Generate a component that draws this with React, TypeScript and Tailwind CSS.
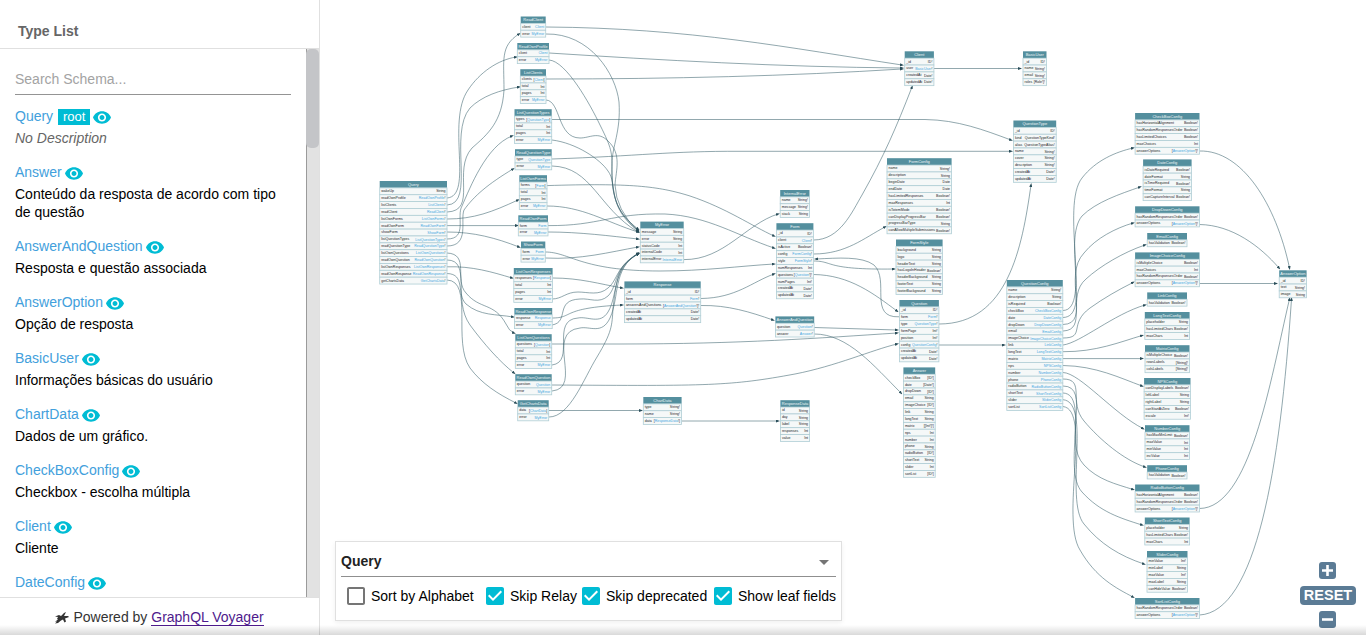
import { Fragment } from 'react';

const types = [
  { name: 'Query', root: true, description: 'No Description' },
  { name: 'Answer', description: 'Conteúdo da resposta de acordo com tipo de questão' },
  { name: 'AnswerAndQuestion', description: 'Resposta e questão associada' },
  { name: 'AnswerOption', description: 'Opção de resposta' },
  { name: 'BasicUser', description: 'Informações básicas do usuário' },
  { name: 'ChartData', description: 'Dados de um gráfico.' },
  { name: 'CheckBoxConfig', description: 'Checkbox - escolha múltipla' },
  { name: 'Client', description: 'Cliente' },
  { name: 'DateConfig' },
];

interface GraphNode {
  name: string;
  x: number;
  y: number;
  w: number;
  fields: string[];
}

const ROW = 6.87;

// "*" marks a field whose type is another node of the graph
const nodes: GraphNode[] = [
  {
    name: 'Query', x: 379.7, y: 181, w: 67.3,
    fields: [
      'wakeUp String', 'readOwnProfile *ReadOwnProfile!', 'listClients *ListClients!', 'readClient *ReadClient!',
      'listOwnForms *ListOwnForms!', 'readOwnForm *ReadOwnForm!', 'showForm *ShowForm!',
      'listQuestionTypes *ListQuestionTypes!', 'readQuestionType *ReadQuestionType!',
      'listOwnQuestions *ListOwnQuestions!', 'readOwnQuestion *ReadOwnQuestion!',
      'listOwnResponses *ListOwnResponses!', 'readOwnResponse *ReadOwnResponse!', 'getChartsData *GetChartsData!',
    ],
  },
  { name: 'ReadClient', x: 520.7, y: 16.5, w: 25, fields: ['client *Client', 'error *MyError'] },
  { name: 'ReadOwnProfile', x: 517.3, y: 43, w: 31.7, fields: ['client *Client', 'error *MyError'] },
  { name: 'ListClients', x: 520.3, y: 69.2, w: 25.7, fields: ['clients *[Client]', 'total Int', 'pages Int', 'error *MyError'] },
  { name: 'ListQuestionTypes', x: 514.5, y: 109.2, w: 37.2, fields: ['types *[QuestionType]', 'total Int', 'pages Int', 'error *MyError'] },
  { name: 'ReadQuestionType', x: 515, y: 149.2, w: 36.7, fields: ['type *QuestionType', 'error *MyError'] },
  { name: 'ListOwnForms', x: 519.3, y: 175.2, w: 27.7, fields: ['forms *[Form]', 'total Int', 'pages Int', 'error *MyError'] },
  { name: 'ReadOwnForm', x: 518.3, y: 215.3, w: 29.7, fields: ['form *Form', 'error *MyError'] },
  { name: 'ShowForm', x: 521, y: 241.5, w: 24.3, fields: ['form *Form', 'error *MyError'] },
  { name: 'ListOwnResponses', x: 513.8, y: 268, w: 38.8, fields: ['responses *[Response]', 'total Int', 'pages Int', 'error *MyError'] },
  { name: 'ReadOwnResponse', x: 514.4, y: 308, w: 37.8, fields: ['response *Response', 'error *MyError'] },
  { name: 'ListOwnQuestions', x: 515.3, y: 334.2, w: 36.4, fields: ['questions *[Question]', 'total Int', 'pages Int', 'error *MyError'] },
  { name: 'ReadOwnQuestion', x: 515.3, y: 374.2, w: 36.4, fields: ['question *Question', 'error *MyError'] },
  { name: 'GetChartsData', x: 517.7, y: 400.2, w: 31, fields: ['data *[ChartData]', 'error *MyError'] },
  {
    name: 'MyError', x: 640.3, y: 221.6, w: 43.4,
    fields: ['message String', 'error String', 'statusCode Int', 'internalCode Int', 'internalError *InternalError'],
  },
  {
    name: 'Response', x: 624.4, y: 281.4, w: 76.3,
    fields: ['_id ID!', 'form *Form!', 'answersAndQuestions *[AnswerAndQuestion!]!', 'createdAt Date!', 'updatedAt Date!'],
  },
  { name: 'ChartData', x: 643.3, y: 397, w: 38.3, fields: ['type String!', 'name String!', 'data *[ResponseData!]'] },
  { name: 'InternalError', x: 780.2, y: 190, w: 29.3, fields: ['name String!', 'message String!', 'stack String'] },
  {
    name: 'Form', x: 776.4, y: 223.2, w: 37,
    fields: [
      '_id ID!', 'client *Client!', 'isActive Boolean!', 'config *FormConfig!', 'style *FormStyle!',
      'numResponses Int', 'questions *[Question!]!', 'numPages Int!', 'createdAt Date!', 'updatedAt Date!',
    ],
  },
  { name: 'AnswerAndQuestion', x: 775.4, y: 316.4, w: 38.8, fields: ['question *Question!', 'answer *Answer!'] },
  { name: 'ResponseData', x: 780.4, y: 400.2, w: 29.2, fields: ['id String', 'day String', 'label String', 'responses Int', 'value Int'] },
  { name: 'Client', x: 904.7, y: 51.3, w: 29.2, fields: ['_id ID!', 'user *BasicUser!', 'createdAt Date!', 'updatedAt Date!'] },
  { name: 'BasicUser', x: 1023, y: 51.3, w: 23.5, fields: ['_id ID!', 'name String!', 'email String!', 'roles [Role!]!'] },
  {
    name: 'QuestionType', x: 1013.4, y: 120.5, w: 42.8,
    fields: [
      '_id ID!', 'kind QuestionTypeKind!', 'alias QuestionTypeAlias!', 'name String!', 'cover String!',
      'description String!', 'createdAt Date!', 'updatedAt Date!',
    ],
  },
  {
    name: 'FormConfig', x: 887, y: 158.2, w: 64.6,
    fields: [
      'name String!', 'description String', 'beginDate Date', 'endDate Date', 'hasLimitedResponses Boolean!',
      'maxResponses Int', 'isTotemMode Boolean!', 'canDisplayProgressBar Boolean!', 'progressBarType String',
      'canAllowMultipleSubmissions Boolean!',
    ],
  },
  {
    name: 'FormStyle', x: 896, y: 239.5, w: 46.6,
    fields: [
      'background String', 'logo String', 'headerText String', 'hasLogoInHeader Boolean!',
      'headerBackground String', 'footerText String', 'footerBackground String',
    ],
  },
  {
    name: 'Question', x: 899.4, y: 300, w: 39.5,
    fields: [
      '_id ID!', 'form *Form!', 'type *QuestionType!', 'formPage Int!', 'position Int!',
      'config *QuestionConfig!', 'createdAt Date!', 'updatedAt Date!',
    ],
  },
  {
    name: 'Answer', x: 903.4, y: 367.4, w: 31.8,
    fields: [
      'checkBox [ID!]', 'date [Date!]', 'dropDown [ID!]', 'email String', 'imageChoice [ID!]', 'link String',
      'longText String', 'matrix [[Int!]!]', 'nps Int', 'number Int', 'phone String', 'radioButton [ID!]',
      'shortText String', 'slider Int', 'sortList [ID!]',
    ],
  },
  {
    name: 'QuestionConfig', x: 1006.8, y: 280, w: 56,
    fields: [
      'name String!', 'description String', 'isRequired Boolean!', 'checkBox *CheckBoxConfig', 'date *DateConfig',
      'dropDown *DropDownConfig', 'email *EmailConfig', 'imageChoice *ImageChoiceConfig', 'link *LinkConfig',
      'longText *LongTextConfig', 'matrix *MatrixConfig', 'nps *NPSConfig', 'number *NumberConfig',
      'phone *PhoneConfig', 'radioButton *RadioButtonConfig', 'shortText *ShortTextConfig',
      'slider *SliderConfig', 'sortList *SortListConfig',
    ],
  },
  {
    name: 'CheckBoxConfig', x: 1135.1, y: 113, w: 64.4,
    fields: [
      'hasHorizontalAlignment Boolean!', 'hasRandomResponsesOrder Boolean!', 'hasLimitedChoices Boolean!',
      'maxChoices Int', 'answerOptions *[AnswerOption!]!',
    ],
  },
  {
    name: 'DateConfig', x: 1143.1, y: 159.4, w: 48.5,
    fields: ['isDateRequired Boolean!', 'dateFormat String', 'isTimeRequired Boolean!', 'timeFormat String', 'canCaptureInterval Boolean!'],
  },
  { name: 'DropDownConfig', x: 1135.1, y: 206.3, w: 64.4, fields: ['hasRandomResponsesOrder Boolean!', 'answerOptions *[AnswerOption!]!'] },
  { name: 'EmailConfig', x: 1147.2, y: 233, w: 39.8, fields: ['hasValidation Boolean!'] },
  {
    name: 'ImageChoiceConfig', x: 1135.1, y: 252.4, w: 64.4,
    fields: ['isMultipleChoice Boolean!', 'maxChoices Int', 'hasRandomResponsesOrder Boolean!', 'answerOptions *[AnswerOption!]!'],
  },
  { name: 'LinkConfig', x: 1147.2, y: 292.4, w: 39.8, fields: ['hasValidation Boolean!'] },
  { name: 'LongTextConfig', x: 1144.8, y: 312, w: 44.8, fields: ['placeholder String', 'hasLimitedChars Boolean!', 'maxChars Int'] },
  { name: 'MatrixConfig', x: 1145, y: 345.2, w: 44.5, fields: ['isMultipleChoice Boolean!', 'rowsLabels [String]!', 'colsLabels [String]!'] },
  {
    name: 'NPSConfig', x: 1144.1, y: 378, w: 46.4,
    fields: ['canDisplayLabels Boolean!', 'leftLabel String', 'rightLabel String', 'canStartAtZero Boolean!', 'escale Int!'],
  },
  { name: 'NumberConfig', x: 1145, y: 425.2, w: 44.5, fields: ['hasMaxMinLimit Boolean!', 'maxValue Int', 'minValue Int', 'incValue Int'] },
  { name: 'PhoneConfig', x: 1147.2, y: 465.2, w: 39.8, fields: ['hasValidation Boolean!'] },
  {
    name: 'RadioButtonConfig', x: 1135.1, y: 484.5, w: 64.4,
    fields: ['hasHorizontalAlignment Boolean!', 'hasRandomResponsesOrder Boolean!', 'answerOptions *[AnswerOption!]!'],
  },
  { name: 'ShortTextConfig', x: 1144.8, y: 517.5, w: 44.8, fields: ['placeholder String', 'hasLimitedChars Boolean!', 'maxChars Int'] },
  {
    name: 'SliderConfig', x: 1147, y: 551, w: 40.5,
    fields: ['minValue Int!', 'minLabel String', 'maxValue Int!', 'maxLabel String', 'canHideValue Boolean!'],
  },
  { name: 'SortListConfig', x: 1135.1, y: 598, w: 64.4, fields: ['hasRandomResponsesOrder Boolean!', 'answerOptions *[AnswerOption!]!'] },
  { name: 'AnswerOption', x: 1279.2, y: 270.3, w: 27.4, fields: ['_id ID!', 'text String!', 'image String'] },
];

const edges = [
  // Query
  'M447 198C474 196 446 122 468 90C480 72 498 60 516 57',
  'M447 205C476 204 448 134 470 108C482 96 500 90 519 87',
  'M447 212C478 211 452 170 472 148C488 134 502 122 504 90C504 60 500 46 519 34',
  'M447 219C474 219 492 212 518 200',
  'M447 225.6H517',
  'M447 232C474 232 496 238 519 247',
  'M447 239C468 239 456 216 462 206C470 188 486 146 512 136',
  'M447 246C470 246 460 220 464 210C474 196 488 184 513 169',
  'M447 253C470 254 454 280 466 293C480 310 494 302 506 324Q509 331 514 333',
  'M447 260C472 260 452 300 470 325C484 344 500 362 514 373',
  'M447 266.8C472 266 492 272 512 278',
  'M447 273.5C466 274 456 294 466 304C480 316 496 314 513 317',
  'M447 280C474 281 452 342 470 368C482 384 498 394 516 403',
  // Payloads to Client and QuestionType
  'M546 27C690 28 790 48 902 65',
  'M549 53C660 60 780 67 902 68',
  'M546 79C670 79 790 76 902 69',
  'M552 119.5H925C958 120 984 130 1011 140',
  'M552 159C640 156 670 151 740 151.3H1011',
  // Payloads to MyError
  'M546 34C590 33 616 74 619 102C621 132 612 146 612 164C611 196 616 212 638 229',
  'M549 60C566 61 590 104 600 125C612 149 612 152 612 170C612 198 618 214 638 230',
  'M546 100C561 101 557 138 580 138C590 138 598 131 608 141C622 154 616 170 615 185Q616 210 638 231',
  'M552 140C576 143 600 159 608 171C618 184 606 206 638 231',
  'M552 166C592 167 598 208 638 232',
  'M547 206C582 206 606 222 638 232',
  'M548 232C580 232 610 236 638 239',
  'M545 258C580 260 610 252 638 247',
  'M552 299C562 299 566 292 578 292C588 292 599 296 608 288C618 280 616 266 638 254',
  'M552 325C570 322 554 300 580 299C590 298 599 304 608 296C618 286 614 266 638 254',
  'M552 365C576 362 550 320 578 318C588 316 600 325 608 312C618 296 612 268 638 254',
  'M552 391C584 388 544 332 580 328C590 326 602 335 610 318C620 296 612 270 638 253',
  'M549 417C570 417 584 378 597 357C612 332 612 326 613 308C617 276 618 266 638 254',
  // Payloads to the rest
  'M547 185.6C630 183 658 186 690 196C726 208 752 226 774 236',
  'M548 225.6C600 226 610 213 665 214C708 216 738 236 774 248',
  'M545 252C570 252 580 271 660 271C704 271 740 266 774 264',
  'M553 278C580 278 600 284 622 288',
  'M552 318C574 318 560 308 622 305',
  'M552 344H620C740 344 820 338 897 333',
  'M552 385C710 386 730 386 795 374C836 366 872 350 897 344',
  'M549 410.5H641',
  'M684 259.6C724 260 746 224 778 214',
  'M701 298.5C736 298 752 282 774 274',
  'M701 305.5C728 305 750 312 773 320',
  'M682 421H778',
  // Form, AnswerAndQuestion, Question
  'M813.5 240C840 240 852 212 862 195C884 156 896 128 912 87',
  'M813.5 254C846 254 864 238 885 227',
  'M813.5 261C834 261 824 270 894 269',
  'M813.5 274.5C850 275 874 294 897 311',
  'M814.3 327.5L897 330',
  'M814.3 334C848 334 874 366 901 393',
  'M899 316.8C868 318 890 280 874 265C862 256 838 258 816 259',
  'M939 324C1008 324 1022 248 1031 185',
  'M939 345H1004',
  // QuestionConfig
  'M1063 310.5C1092 310 1060 206 1082 178C1096 160 1116 152 1133 148',
  'M1063 317.5C1092 317 1062 240 1082 216C1096 202 1120 194 1140 187',
  'M1063 324.5C1092 324 1062 276 1084 253C1096 238 1116 228 1133 223',
  'M1063 331C1088 330 1066 296 1086 279C1100 266 1124 252 1145 245',
  'M1063 338C1086 338 1068 324 1090 308C1104 298 1118 290 1133 282.5',
  'M1063 345C1080 343 1114 314 1145 305',
  'M1063 351.7C1096 352 1120 342 1142 335.5',
  'M1063 358.6H1142',
  'M1063 365.5C1096 366 1120 378 1142 386',
  'M1063 372.5C1080 373 1114 414 1143 428.5',
  'M1063 379C1086 379 1068 402 1084 421C1100 440 1124 460 1145 467',
  'M1063 386C1092 386 1062 442 1084 465C1098 480 1116 484 1133 489.5',
  'M1063 393C1090 394 1062 470 1082 492C1100 512 1120 518 1142 525',
  'M1063 399.7C1092 402 1064 500 1084 524C1100 544 1120 556 1144 564',
  'M1063 406.5C1092 410 1060 518 1080 550C1096 578 1116 588 1133 597',
  // Answer options
  'M1199.5 151C1242 150 1276 204 1289.5 268',
  'M1199.5 224.5C1232 225 1260 246 1279 268',
  'M1199.5 283.5H1276',
  'M1199.5 508.5C1250 508 1270 382 1289.5 299',
  'M1199.5 615C1256 612 1280 470 1291.5 299',
  // Client to BasicUser
  'M934 68.5H1020',
];

// Colors only the type name; list brackets and the non-null mark stay dark
function FieldType({ type }: { type: string }) {
  if (!type.startsWith('*')) return <>{type}</>;
  const [, before, name, after] = type.slice(1).match(/^(\[*)(\w+)(.*)$/)!;
  return (
    <>
      {before}
      <tspan fill="#42a6e0">{name}</tspan>
      {after}
    </>
  );
}

function NodeBox({ node }: { node: GraphNode }) {
  return (
    <g>
      <rect x={node.x} y={node.y} width={node.w} height={ROW} fill="#548f9e" />
      <text x={node.x + node.w / 2} y={node.y + 4.8} fontSize="4" textAnchor="middle" fill="#eef5f6">
        {node.name}
      </text>
      {node.fields.map((field, i) => {
        const [name, type] = field.split(' ');
        const y = node.y + ROW * (i + 1);
        return (
          <Fragment key={field}>
            <rect x={node.x} y={y} width={node.w} height={ROW} fill="#f5f8f8" stroke="#b0ced5" strokeWidth="0.8" />
            <text x={node.x + 1.5} y={y + 4.4} fontSize="3.55">{name}</text>
            <text x={node.x + node.w - 1.5} y={y + 4.6} fontSize="3.55" textAnchor="end">
              <FieldType type={type} />
            </text>
          </Fragment>
        );
      })}
    </g>
  );
}

function Eye() {
  return (
    <svg viewBox="1 4.5 22 15" className="w-[18px] h-[13px] ml-[3px] mt-[2px]" fill="#00bcd4">
      <path d="M12 4.5C7 4.5 2.73 7.61 1 12c1.73 4.39 6 7.5 11 7.5s9.27-3.11 11-7.5c-1.73-4.39-6-7.5-11-7.5zM12 17c-2.76 0-5-2.24-5-5s2.24-5 5-5 5 2.24 5 5-2.24 5-5 5zm0-8c-1.66 0-3 1.34-3 3s1.34 3 3 3 3-1.34 3-3-1.34-3-3-3z" />
    </svg>
  );
}

function Checkbox({ checked, label, className }: { checked?: boolean; label: string; className: string }) {
  return (
    <label className={`flex items-center shrink-0 ${className}`}>
      <svg viewBox="3 3 18 18" className="w-[18px] h-[18px] shrink-0 mr-[6px]" fill={checked ? '#00bcd4' : '#757575'}>
        {checked ? (
          <path d="M19 3H5c-1.11 0-2 .9-2 2v14c0 1.1.89 2 2 2h14c1.11 0 2-.9 2-2V5c0-1.1-.89-2-2-2zm-9 14l-5-5 1.41-1.41L10 14.17l7.59-7.59L19 8l-9 9z" />
        ) : (
          <path d="M19 5v14H5V5h14m0-2H5c-1.1 0-2 .9-2 2v14c0 1.1.9 2 2 2h14c1.1 0 2-.9 2-2V5c0-1.1-.9-2-2-2z" />
        )}
      </svg>
      {label}
    </label>
  );
}

function Sidebar() {
  return (
    <aside className="w-[320px] h-full shrink-0 flex flex-col border-r border-[#e0e0e0] bg-white">
      <h2 className="h-[49px] shrink-0 pt-[22px] pl-[18px] leading-[18px] font-bold text-[#666] border-b border-[#e0e0e0]">
        Type List
      </h2>
      <div className="flex-1 min-h-0 flex">
        <div className="w-[306px] shrink-0 overflow-hidden px-[15px] pt-[19px]">
          <div className="h-[27px] border-b border-[#949494] text-[#a3a3a3] leading-[22px]">Search Schema...</div>
          <ul className="mt-3">
            {types.map((type) => (
              <li key={type.name} className="mb-4">
                <div className="h-[18px] flex items-center text-[#42a0dc]">
                  {type.name}
                  {type.root && (
                    <span className="ml-[5px] mt-px w-8 h-4 bg-[#00bcd4] text-white text-[13px] leading-4 text-center">root</span>
                  )}
                  <Eye />
                </div>
                {type.description && (
                  <p className={type.root ? 'mt-1 leading-[18px] italic text-[#666]' : 'mt-1 leading-[18px]'}>{type.description}</p>
                )}
              </li>
            ))}
          </ul>
        </div>
        <div className="w-[13px] bg-[#e2e2e2] border-l border-[#9b9b9b]">
          <div className="-ml-px h-[99px] rounded-[5px] bg-[#c4c5c8]" />
        </div>
      </div>
      <footer className="h-[38px] shrink-0 flex items-center justify-center pt-px border-t border-[#e0e0e0] text-[#333]">
        <svg viewBox="0 0 14 12" className="w-[14px] h-3 mr-1 mt-px" fill="#333">
          <path d="M0 4.5L4 3l2 1 3-3 2-1-1 2-1 2 4 0 1 1-4 1.500 1 3-1.500 1-1.500-3-2 1-3 2.500-3 .5 2-2-2 .3 3-2.300-1-.5L3 5z" />
        </svg>
        <span>
          Powered by <a className="text-[#4e1a8c] border-b border-[#4e1a8c] leading-4 inline-block">GraphQL Voyager</a>
        </span>
      </footer>
    </aside>
  );
}

export default function App() {
  return (
    <div className="relative w-full h-[635px] overflow-hidden flex bg-white text-black text-[14px] font-['Liberation_Sans',Arial,sans-serif]">
      <Sidebar />
      <main className="relative flex-1 min-w-0">
        <svg viewBox="320 0 1046 635" className="w-[1046px] h-[635px]" fill="#1c2326">
          <defs>
            <marker id="arrow" viewBox="0 0 4 3" refX="2" refY="1.5" markerWidth="4" markerHeight="3" markerUnits="userSpaceOnUse" orient="auto">
              <path d="M0 0L4 1.500L0 3z" fill="#294d59" />
            </marker>
          </defs>
          <g fill="none" stroke="#375f6b" strokeWidth="0.55">
            {edges.map((d) => <path key={d} d={d} markerEnd="url(#arrow)" />)}
          </g>
          {nodes.map((node) => <NodeBox key={node.name} node={node} />)}
        </svg>

        <section className="absolute left-[15px] top-[541px] w-[507px] h-[80px] px-[5px] pt-[5px] bg-white border border-[#e0e0e0] shadow-[0_2px_5px_rgba(0,0,0,0.06)]">
          <div className="h-[30px] flex items-center justify-between pb-px border-b border-[#8f8f8f] font-bold text-[#222]">
            Query
            <svg viewBox="0 0 10 5" className="w-[10px] h-[5px] mr-[7px] mt-[3px]" fill="#757575">
              <path d="M0 0h10L5 5z" />
            </svg>
          </div>
          <div className="flex mt-[9px] h-5 whitespace-nowrap">
            <Checkbox label="Sort by Alphabet" className="ml-[6px] w-[139px]" />
            <Checkbox checked label="Skip Relay" className="w-[96px]" />
            <Checkbox checked label="Skip deprecated" className="w-[132px]" />
            <Checkbox checked label="Show leaf fields" className="w-[122px]" />
          </div>
        </section>

        <div className="absolute right-[10px] top-[562px] flex flex-col items-center text-white">
          <svg viewBox="0 0 17 17" className="w-[17px] h-[17px] mr-px">
            <rect width="17" height="17" rx="3" fill="#5b7b95" />
            <path d="M8.500 3v11M3 8.500h11" stroke="white" strokeWidth="2.600" />
          </svg>
          <div className="mt-[7px] w-[56px] h-[19px] rounded-[4px] bg-[#5b7b95] text-[14.5px] leading-[19px] font-bold text-center">RESET</div>
          <svg viewBox="0 0 17 17" className="w-[17px] h-[17px] mt-[6px] mr-px">
            <rect width="17" height="17" rx="3" fill="#5b7b95" />
            <path d="M3 8.500h11" stroke="white" strokeWidth="2.600" />
          </svg>
        </div>
      </main>
      <div className="absolute left-0 bottom-0 w-full h-[10px] bg-linear-to-b from-transparent to-black/15" />
    </div>
  );
}
